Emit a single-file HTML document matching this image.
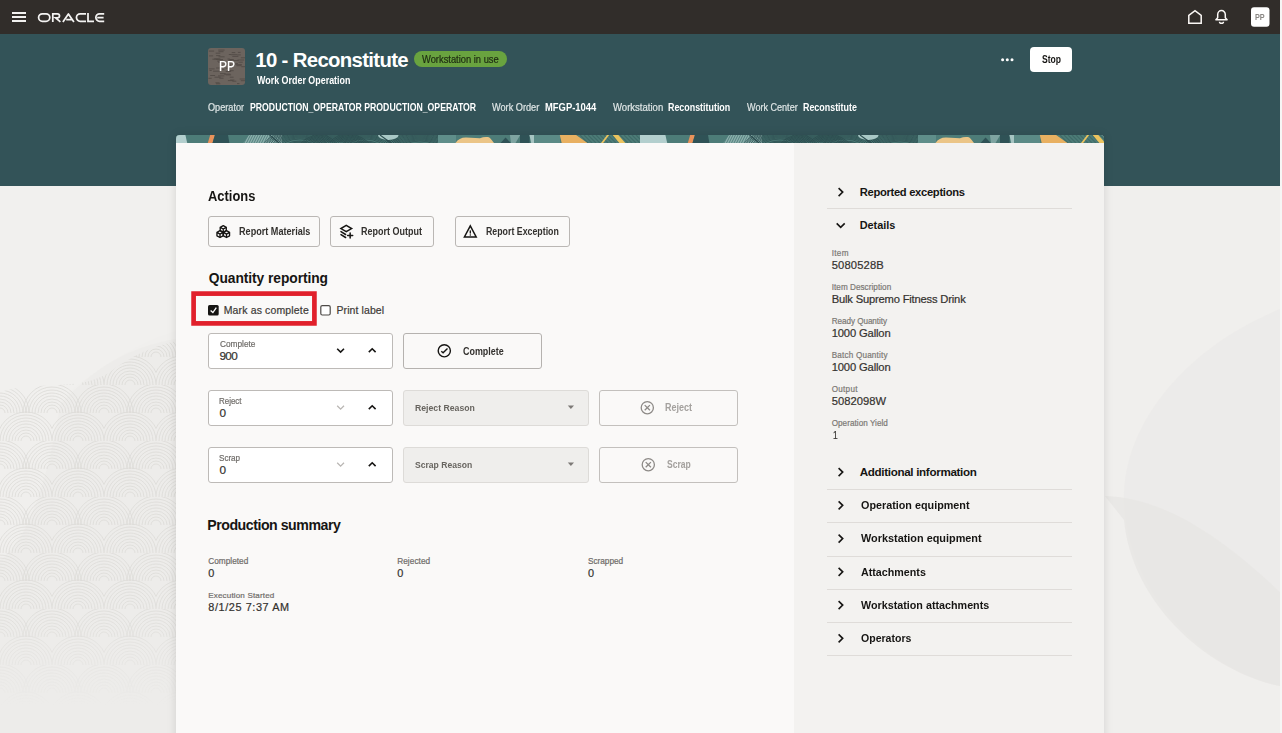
<!DOCTYPE html>
<html><head><meta charset="utf-8"><style>
html,body{margin:0;padding:0;width:1282px;height:733px;overflow:hidden;position:relative;background:#f0efed;font-family:"Liberation Sans",sans-serif;}
.t{position:absolute;white-space:nowrap;}
.t.r{-webkit-text-stroke:0.2px currentColor;}
.a{position:absolute;box-sizing:border-box;}
svg{position:absolute;overflow:visible;}
</style></head><body>
<!-- top bar -->
<div class="a" style="left:0;top:0;width:1282px;height:34px;background:#312d2a"></div>
<div class="a" style="left:0;top:34px;width:1282px;height:152px;background:#335358"></div>
<div class="a" style="left:1280px;top:0;width:2px;height:733px;background:#f6f6f5"></div>
<!-- bg pattern -->
<svg style="left:0;top:186px" width="1280" height="547" viewBox="0 186 1280 547">
  <defs>
    <pattern id="arcs" x="0" y="385" width="52" height="56" patternUnits="userSpaceOnUse">
      <path d="M21,56 A5,5 0 0 1 31,56 M18,56 A8,8 0 0 1 34,56 M15,56 A11,11 0 0 1 37,56 M12,56 A14,14 0 0 1 40,56 M9,56 A17,17 0 0 1 43,56 M6,56 A20,20 0 0 1 46,56 M3,56 A23,23 0 0 1 49,56 M0,56 A26,26 0 0 1 52,56 M-3,56 A29,29 0 0 1 55,56 M-5,28 A5,5 0 0 1 5,28 M-8,28 A8,8 0 0 1 8,28 M-11,28 A11,11 0 0 1 11,28 M-14,28 A14,14 0 0 1 14,28 M-17,28 A17,17 0 0 1 17,28 M-20,28 A20,20 0 0 1 20,28 M-23,28 A23,23 0 0 1 23,28 M-26,28 A26,26 0 0 1 26,28 M-29,28 A29,29 0 0 1 29,28 M47,28 A5,5 0 0 1 57,28 M44,28 A8,8 0 0 1 60,28 M41,28 A11,11 0 0 1 63,28 M38,28 A14,14 0 0 1 66,28 M35,28 A17,17 0 0 1 69,28 M32,28 A20,20 0 0 1 72,28 M29,28 A23,23 0 0 1 75,28 M26,28 A26,26 0 0 1 78,28 M23,28 A29,29 0 0 1 81,28 M21,0 A5,5 0 0 1 31,0 M18,0 A8,8 0 0 1 34,0 M15,0 A11,11 0 0 1 37,0 M12,0 A14,14 0 0 1 40,0 M9,0 A17,17 0 0 1 43,0 M6,0 A20,20 0 0 1 46,0 M3,0 A23,23 0 0 1 49,0 M0,0 A26,26 0 0 1 52,0 M-3,0 A29,29 0 0 1 55,0" fill="none" stroke="#dbd9d6" stroke-width="0.8"/>
    </pattern>
    <linearGradient id="fadeb" x1="0" y1="0" x2="0" y2="1">
      <stop offset="0" stop-color="#fff" stop-opacity="1"/>
      <stop offset="0.7" stop-color="#fff" stop-opacity="0.85"/>
      <stop offset="0.93" stop-color="#fff" stop-opacity="0"/>
    </linearGradient>
    <mask id="m1"><path d="M0,392 C40,380 80,392 110,372 C140,350 160,345 180,340 V733 H0 Z" fill="url(#fadeb)"/></mask>
  </defs>
  <path d="M0,186 H180 V330 C140,340 95,370 60,400 L0,400 Z" fill="#f1f0ee"/>
  <path d="M60,405 C100,360 140,345 180,338 V733 H0 V560 C30,540 50,470 60,405 Z" fill="#ecebe9" opacity="0.8"/>
  <rect x="0" y="330" width="180" height="403" fill="url(#arcs)" mask="url(#m1)"/>
  <path d="M1280,309 C1180,350 1120,430 1124,505 C1130,600 1210,672 1280,686 Z" fill="#ebeae8" opacity="0.75"/>
  <path d="M1105,496 C1170,498 1230,545 1280,592 L1280,686 C1210,672 1132,605 1124,520 Z" fill="#e7e6e4" opacity="0.8"/>
</svg>
<!-- hamburger -->
<div class="a" style="left:12px;top:12px;width:14px;height:2px;background:#f2f1f0"></div>
<div class="a" style="left:12px;top:16px;width:14px;height:2px;background:#f2f1f0"></div>
<div class="a" style="left:12px;top:20px;width:14px;height:2px;background:#f2f1f0"></div>
<!-- ORACLE logo -->
<svg style="left:0;top:0" width="120" height="33" viewBox="0 0 120 33">
  <g fill="none" stroke="#f4f3f2" stroke-width="1.75" stroke-linejoin="miter">
    <rect x="38.6" y="13.75" width="11.2" height="7.5" rx="3.75"/>
    <path d="M52.8,21.9 V13.75 H57.4 A2.1,2.1 0 0 1 57.4,17.95 H55.6 L60.4,21.9"/>
    <path d="M62.9,21.9 L68.4,13.9 L73.9,21.9 M66.2,19.5 H72.2" stroke-linejoin="round"/>
    <path d="M86,13.75 H80.2 A3.75,3.75 0 0 0 80.2,21.25 H86"/>
    <path d="M88,12.9 V21.25 H94"/>
    <path d="M104.2,13.75 H99.6 A3.75,3.75 0 0 0 99.6,21.25 H104.2 M97.2,17.5 H103.6"/>
  </g>
</svg>
<!-- top right icons -->
<svg style="left:1180px;top:0" width="100" height="33" viewBox="1180 0 100 33">
  <path d="M1188.8,23.3 V15.3 L1195,10.6 L1201.2,15.3 V23.3 Z" fill="none" stroke="#fbf8f6" stroke-width="1.5" stroke-linejoin="miter"/>
  <path d="M1215.9,19.7 H1227.1 L1225.3,17.8 V14.6 A3.7,4 0 0 0 1217.7,14.6 V17.8 Z" fill="none" stroke="#fbf8f6" stroke-width="1.5" stroke-linejoin="round"/>
  <path d="M1219.5,21.7 A2,1.6 0 0 0 1223.5,21.7" fill="none" stroke="#fbf8f6" stroke-width="1.4"/>
  <rect x="1251" y="7.2" width="18.5" height="19.6" rx="3" fill="#ffffff"/>
</svg>
<!-- header avatar -->
<svg style="left:208px;top:48px" width="37" height="37" viewBox="0 0 37 37">
  <rect x="0" y="0" width="37" height="37" rx="3" fill="#6c645e"/>
  <g stroke="#4a433e" stroke-width="0.9" opacity="0.75"><path d="M8.1,20.0 H11.9 M20.5,22.9 H22.9 M0.4,30.3 H3.7 M8.0,35.8 H12.3 M28.4,17.7 H33.6 M5.1,23.2 H11.5 M17.8,26.9 H23.1 M2.2,27.5 H7.1 M10.2,2.1 H16.6 M16.1,26.2 H22.5 M24.3,33.2 H28.3 M27.2,16.6 H33.9 M29.9,4.4 H32.6 M7.4,34.8 H11.6 M21.3,11.5 H25.8 M13.1,13.3 H18.0 M19.9,32.6 H25.3 M31.6,31.0 H37.0 M22.8,6.7 H29.1 M32.8,32.7 H37.0 M24.3,8.4 H30.4 M19.5,11.0 H21.8 M29.0,35.6 H31.5 M27.2,15.4 H30.0 M10.0,27.9 H16.4 M1.5,22.5 H3.7 M24.4,12.6 H30.8 M33.3,18.7 H37.0 M10.5,3.7 H15.5 M1.1,7.9 H5.1 M20.8,6.5 H23.0 M29.5,12.0 H36.3 M30.5,14.2 H34.8 M17.7,23.5 H22.7 M19.0,22.7 H25.7 M17.2,16.1 H22.8 M8.1,11.5 H15.0 M17.7,20.2 H19.8 M14.1,21.3 H16.2 M20.9,23.1 H23.2 M21.3,17.3 H26.7 M12.0,25.7 H17.7 M0.8,3.1 H6.1 M32.8,9.8 H37.0 M20.2,12.2 H24.0 M10.6,13.9 H15.6 M10.2,14.2 H16.1 M0.9,20.9 H6.6 M10.5,8.8 H16.6 M8.1,7.6 H12.3 M23.7,4.6 H27.3 M11.3,30.2 H15.5 M29.1,6.9 H32.8 M22.1,32.0 H26.4 M7.7,5.2 H12.3 M6.5,29.2 H12.7 M6.2,10.8 H12.3 M21.8,29.2 H25.6 M4.4,11.2 H10.4 M9.2,13.1 H13.3"/></g>
</svg>
<!-- badge -->
<div class="a" style="left:414px;top:51px;width:93px;height:16px;border-radius:8px;background:#69a33f"></div>
<!-- more dots + stop -->
<svg style="left:995px;top:52px" width="25" height="15" viewBox="995 52 25 15">
  <circle cx="1002.6" cy="59.7" r="1.5" fill="#fff"/><circle cx="1007.3" cy="59.7" r="1.5" fill="#fff"/><circle cx="1012" cy="59.7" r="1.5" fill="#fff"/>
</svg>
<div class="a" style="left:1030px;top:47px;width:42px;height:25px;border-radius:4px;background:#ffffff"></div>

<!-- card -->
<div class="a" style="left:176px;top:135px;width:928px;height:620px;border-radius:4px 4px 0 0;box-shadow:0 0 8px 1px rgba(0,0,0,0.10)"></div>
<div class="a" style="left:176px;top:135px;width:928px;height:600px;border-radius:4px 4px 0 0;background:#faf9f8;overflow:hidden">
  <svg style="left:0;top:0;overflow:hidden" width="928" height="8" viewBox="176 135 928 8" preserveAspectRatio="none">
    
    <rect x="176" y="135" width="928" height="8" fill="#4f7e7a"/>
    <g>
        <rect x="160" y="135" width="480" height="8" fill="#4d7c78"/>
        <polygon points="160,135 185.4,135 187.2,143 160,143" fill="#b3cfce"/>
        <polygon points="210.2,135 214.9,135 212.5,143 207.8,143" fill="#e9925a"/>
        <polygon points="214.9,135 228,135 229.4,143 212.5,143" fill="#2f5256"/>
        <polygon points="249,135 282,135 282,143 243.4,143" fill="#8db0ad"/>
        <path d="M244.0,143 L248.0,135 M246.5,143 L250.5,135 M249.0,143 L253.0,135 M251.5,143 L255.5,135 M254.0,143 L258.0,135 M256.5,143 L260.5,135 M259.0,143 L263.0,135 M261.5,143 L265.5,135 M264.0,143 L268.0,135 M266.5,143 L270.5,135 M269.0,143 L273.0,135 M271.5,143 L275.5,135 M274.0,143 L278.0,135 M276.5,143 L280.5,135 M279.0,143 L283.0,135" stroke="#4d7c78" stroke-width="0.9"/>
        <rect x="282" y="135" width="156" height="8" fill="#4a7874"/>
        <path d="M292.0,150.0 A8,4 0 0 1 308.0,150.0 M290.0,150.0 A10,5 0 0 1 310.0,150.0 M288.0,150.0 A12,6 0 0 1 312.0,150.0 M286.0,150.0 A14,7 0 0 1 314.0,150.0 M284.0,150.0 A16,8 0 0 1 316.0,150.0 M282.0,150.0 A18,9 0 0 1 318.0,150.0 M280.0,150.0 A20,11 0 0 1 320.0,150.0 M278.0,150.0 A22,12 0 0 1 322.0,150.0 M276.0,150.0 A24,13 0 0 1 324.0,150.0 M274.0,150.0 A26,14 0 0 1 326.0,150.0 M272.0,150.0 A28,15 0 0 1 328.0,150.0 M270.0,150.0 A30,16 0 0 1 330.0,150.0 M268.0,150.0 A32,17 0 0 1 332.0,150.0 M266.0,150.0 A34,18 0 0 1 334.0,150.0 M264.0,150.0 A36,19 0 0 1 336.0,150.0 M262.0,150.0 A38,20 0 0 1 338.0,150.0 M327.0,152.0 A8,4 0 0 1 343.0,152.0 M325.0,152.0 A10,5 0 0 1 345.0,152.0 M323.0,152.0 A12,6 0 0 1 347.0,152.0 M321.0,152.0 A14,7 0 0 1 349.0,152.0 M319.0,152.0 A16,8 0 0 1 351.0,152.0 M317.0,152.0 A18,9 0 0 1 353.0,152.0 M315.0,152.0 A20,11 0 0 1 355.0,152.0 M313.0,152.0 A22,12 0 0 1 357.0,152.0 M311.0,152.0 A24,13 0 0 1 359.0,152.0 M309.0,152.0 A26,14 0 0 1 361.0,152.0 M307.0,152.0 A28,15 0 0 1 363.0,152.0 M305.0,152.0 A30,16 0 0 1 365.0,152.0 M303.0,152.0 A32,17 0 0 1 367.0,152.0 M301.0,152.0 A34,18 0 0 1 369.0,152.0 M299.0,152.0 A36,19 0 0 1 371.0,152.0 M297.0,152.0 A38,20 0 0 1 373.0,152.0 M357.0,150.0 A8,4 0 0 1 373.0,150.0 M355.0,150.0 A10,5 0 0 1 375.0,150.0 M353.0,150.0 A12,6 0 0 1 377.0,150.0 M351.0,150.0 A14,7 0 0 1 379.0,150.0 M349.0,150.0 A16,8 0 0 1 381.0,150.0 M347.0,150.0 A18,9 0 0 1 383.0,150.0 M345.0,150.0 A20,11 0 0 1 385.0,150.0 M343.0,150.0 A22,12 0 0 1 387.0,150.0 M341.0,150.0 A24,13 0 0 1 389.0,150.0 M339.0,150.0 A26,14 0 0 1 391.0,150.0 M337.0,150.0 A28,15 0 0 1 393.0,150.0 M335.0,150.0 A30,16 0 0 1 395.0,150.0 M333.0,150.0 A32,17 0 0 1 397.0,150.0 M331.0,150.0 A34,18 0 0 1 399.0,150.0 M329.0,150.0 A36,19 0 0 1 401.0,150.0 M327.0,150.0 A38,20 0 0 1 403.0,150.0 M412.0,152.0 A8,4 0 0 1 428.0,152.0 M410.0,152.0 A10,5 0 0 1 430.0,152.0 M408.0,152.0 A12,6 0 0 1 432.0,152.0 M406.0,152.0 A14,7 0 0 1 434.0,152.0 M404.0,152.0 A16,8 0 0 1 436.0,152.0 M402.0,152.0 A18,9 0 0 1 438.0,152.0 M400.0,152.0 A20,11 0 0 1 440.0,152.0 M398.0,152.0 A22,12 0 0 1 442.0,152.0 M396.0,152.0 A24,13 0 0 1 444.0,152.0 M394.0,152.0 A26,14 0 0 1 446.0,152.0 M392.0,152.0 A28,15 0 0 1 448.0,152.0 M390.0,152.0 A30,16 0 0 1 450.0,152.0 M388.0,152.0 A32,17 0 0 1 452.0,152.0 M386.0,152.0 A34,18 0 0 1 454.0,152.0 M384.0,152.0 A36,19 0 0 1 456.0,152.0 M382.0,152.0 A38,20 0 0 1 458.0,152.0" stroke="#2b4b4e" stroke-width="0.7" fill="none"/>
        <path d="M269.6,135 L279,143" stroke="#2b4b4e" stroke-width="1.2"/>
        <path d="M378,135 H398.6 A10.3,5 0 0 1 378,135 Z" fill="#a9c8c6"/>
        <path d="M380,135 L391,143" stroke="#2b4b4e" stroke-width="1.1"/>
        <rect x="438" y="135" width="18" height="8" fill="#5f8e8a"/>
        <path d="M455.5,143 C458,139.5 461,137.6 466,137.6 L480,138.3 C483,136.8 486,136.6 489,137.2 C491,138.5 492.5,141 494,143 Z" fill="#ebc587"/>
        <polygon points="500.5,143 505.6,137.5 510.8,143" fill="#2f5256"/>
        <polygon points="509.9,135 520.2,135 515.5,143 511,143" fill="#7ea4a1"/>
        <rect x="520" y="135" width="9.6" height="8" fill="#2f5256"/>
        <polygon points="529.4,135 534,135 537.8,143 531.2,143" fill="#a6c4c2"/>
        <rect x="534" y="135" width="26" height="8" fill="#5b8a86"/>
        <path d="M572.0,135 L580.0,143 M576.0,135 L584.0,143 M580.0,135 L588.0,143 M584.0,135 L592.0,143 M588.0,135 L596.0,143 M592.0,135 L600.0,143 M596.0,135 L604.0,143 M600.0,135 L608.0,143 M604.0,135 L612.0,143 M608.0,135 L616.0,143 M612.0,135 L620.0,143 M616.0,135 L624.0,143 M620.0,135 L628.0,143 M624.0,135 L632.0,143 M628.0,135 L636.0,143 M632.0,135 L640.0,143 M636.0,135 L644.0,143" stroke="#3f6b68" stroke-width="1.2"/>
        <polygon points="559.8,135 576.2,135 587.4,143 561.7,143" fill="#e8b061"/>
        <polygon points="607,135 609.2,135 603.2,143 601,143" fill="#ebc35e"/>
        <polygon points="612.7,135 618.3,135 625.3,143 619.3,143" fill="#ebc35e"/>
      </g>
    <g transform="translate(480,0)">
        <rect x="160" y="135" width="480" height="8" fill="#4d7c78"/>
        <polygon points="160,135 185.4,135 187.2,143 160,143" fill="#b3cfce"/>
        <polygon points="210.2,135 214.9,135 212.5,143 207.8,143" fill="#e9925a"/>
        <polygon points="214.9,135 228,135 229.4,143 212.5,143" fill="#2f5256"/>
        <polygon points="249,135 282,135 282,143 243.4,143" fill="#8db0ad"/>
        <path d="M244.0,143 L248.0,135 M246.5,143 L250.5,135 M249.0,143 L253.0,135 M251.5,143 L255.5,135 M254.0,143 L258.0,135 M256.5,143 L260.5,135 M259.0,143 L263.0,135 M261.5,143 L265.5,135 M264.0,143 L268.0,135 M266.5,143 L270.5,135 M269.0,143 L273.0,135 M271.5,143 L275.5,135 M274.0,143 L278.0,135 M276.5,143 L280.5,135 M279.0,143 L283.0,135" stroke="#4d7c78" stroke-width="0.9"/>
        <rect x="282" y="135" width="156" height="8" fill="#4a7874"/>
        <path d="M292.0,150.0 A8,4 0 0 1 308.0,150.0 M290.0,150.0 A10,5 0 0 1 310.0,150.0 M288.0,150.0 A12,6 0 0 1 312.0,150.0 M286.0,150.0 A14,7 0 0 1 314.0,150.0 M284.0,150.0 A16,8 0 0 1 316.0,150.0 M282.0,150.0 A18,9 0 0 1 318.0,150.0 M280.0,150.0 A20,11 0 0 1 320.0,150.0 M278.0,150.0 A22,12 0 0 1 322.0,150.0 M276.0,150.0 A24,13 0 0 1 324.0,150.0 M274.0,150.0 A26,14 0 0 1 326.0,150.0 M272.0,150.0 A28,15 0 0 1 328.0,150.0 M270.0,150.0 A30,16 0 0 1 330.0,150.0 M268.0,150.0 A32,17 0 0 1 332.0,150.0 M266.0,150.0 A34,18 0 0 1 334.0,150.0 M264.0,150.0 A36,19 0 0 1 336.0,150.0 M262.0,150.0 A38,20 0 0 1 338.0,150.0 M327.0,152.0 A8,4 0 0 1 343.0,152.0 M325.0,152.0 A10,5 0 0 1 345.0,152.0 M323.0,152.0 A12,6 0 0 1 347.0,152.0 M321.0,152.0 A14,7 0 0 1 349.0,152.0 M319.0,152.0 A16,8 0 0 1 351.0,152.0 M317.0,152.0 A18,9 0 0 1 353.0,152.0 M315.0,152.0 A20,11 0 0 1 355.0,152.0 M313.0,152.0 A22,12 0 0 1 357.0,152.0 M311.0,152.0 A24,13 0 0 1 359.0,152.0 M309.0,152.0 A26,14 0 0 1 361.0,152.0 M307.0,152.0 A28,15 0 0 1 363.0,152.0 M305.0,152.0 A30,16 0 0 1 365.0,152.0 M303.0,152.0 A32,17 0 0 1 367.0,152.0 M301.0,152.0 A34,18 0 0 1 369.0,152.0 M299.0,152.0 A36,19 0 0 1 371.0,152.0 M297.0,152.0 A38,20 0 0 1 373.0,152.0 M357.0,150.0 A8,4 0 0 1 373.0,150.0 M355.0,150.0 A10,5 0 0 1 375.0,150.0 M353.0,150.0 A12,6 0 0 1 377.0,150.0 M351.0,150.0 A14,7 0 0 1 379.0,150.0 M349.0,150.0 A16,8 0 0 1 381.0,150.0 M347.0,150.0 A18,9 0 0 1 383.0,150.0 M345.0,150.0 A20,11 0 0 1 385.0,150.0 M343.0,150.0 A22,12 0 0 1 387.0,150.0 M341.0,150.0 A24,13 0 0 1 389.0,150.0 M339.0,150.0 A26,14 0 0 1 391.0,150.0 M337.0,150.0 A28,15 0 0 1 393.0,150.0 M335.0,150.0 A30,16 0 0 1 395.0,150.0 M333.0,150.0 A32,17 0 0 1 397.0,150.0 M331.0,150.0 A34,18 0 0 1 399.0,150.0 M329.0,150.0 A36,19 0 0 1 401.0,150.0 M327.0,150.0 A38,20 0 0 1 403.0,150.0 M412.0,152.0 A8,4 0 0 1 428.0,152.0 M410.0,152.0 A10,5 0 0 1 430.0,152.0 M408.0,152.0 A12,6 0 0 1 432.0,152.0 M406.0,152.0 A14,7 0 0 1 434.0,152.0 M404.0,152.0 A16,8 0 0 1 436.0,152.0 M402.0,152.0 A18,9 0 0 1 438.0,152.0 M400.0,152.0 A20,11 0 0 1 440.0,152.0 M398.0,152.0 A22,12 0 0 1 442.0,152.0 M396.0,152.0 A24,13 0 0 1 444.0,152.0 M394.0,152.0 A26,14 0 0 1 446.0,152.0 M392.0,152.0 A28,15 0 0 1 448.0,152.0 M390.0,152.0 A30,16 0 0 1 450.0,152.0 M388.0,152.0 A32,17 0 0 1 452.0,152.0 M386.0,152.0 A34,18 0 0 1 454.0,152.0 M384.0,152.0 A36,19 0 0 1 456.0,152.0 M382.0,152.0 A38,20 0 0 1 458.0,152.0" stroke="#2b4b4e" stroke-width="0.7" fill="none"/>
        <path d="M269.6,135 L279,143" stroke="#2b4b4e" stroke-width="1.2"/>
        <path d="M378,135 H398.6 A10.3,5 0 0 1 378,135 Z" fill="#a9c8c6"/>
        <path d="M380,135 L391,143" stroke="#2b4b4e" stroke-width="1.1"/>
        <rect x="438" y="135" width="18" height="8" fill="#5f8e8a"/>
        <path d="M455.5,143 C458,139.5 461,137.6 466,137.6 L480,138.3 C483,136.8 486,136.6 489,137.2 C491,138.5 492.5,141 494,143 Z" fill="#ebc587"/>
        <polygon points="500.5,143 505.6,137.5 510.8,143" fill="#2f5256"/>
        <polygon points="509.9,135 520.2,135 515.5,143 511,143" fill="#7ea4a1"/>
        <rect x="520" y="135" width="9.6" height="8" fill="#2f5256"/>
        <polygon points="529.4,135 534,135 537.8,143 531.2,143" fill="#a6c4c2"/>
        <rect x="534" y="135" width="26" height="8" fill="#5b8a86"/>
        <path d="M572.0,135 L580.0,143 M576.0,135 L584.0,143 M580.0,135 L588.0,143 M584.0,135 L592.0,143 M588.0,135 L596.0,143 M592.0,135 L600.0,143 M596.0,135 L604.0,143 M600.0,135 L608.0,143 M604.0,135 L612.0,143 M608.0,135 L616.0,143 M612.0,135 L620.0,143 M616.0,135 L624.0,143 M620.0,135 L628.0,143 M624.0,135 L632.0,143 M628.0,135 L636.0,143 M632.0,135 L640.0,143 M636.0,135 L644.0,143" stroke="#3f6b68" stroke-width="1.2"/>
        <polygon points="559.8,135 576.2,135 587.4,143 561.7,143" fill="#e8b061"/>
        <polygon points="607,135 609.2,135 603.2,143 601,143" fill="#ebc35e"/>
        <polygon points="612.7,135 618.3,135 625.3,143 619.3,143" fill="#ebc35e"/>
      </g>
    <g transform="translate(960,0)">
        <rect x="160" y="135" width="480" height="8" fill="#4d7c78"/>
        <polygon points="160,135 185.4,135 187.2,143 160,143" fill="#b3cfce"/>
        <polygon points="210.2,135 214.9,135 212.5,143 207.8,143" fill="#e9925a"/>
        <polygon points="214.9,135 228,135 229.4,143 212.5,143" fill="#2f5256"/>
        <polygon points="249,135 282,135 282,143 243.4,143" fill="#8db0ad"/>
        <path d="M244.0,143 L248.0,135 M246.5,143 L250.5,135 M249.0,143 L253.0,135 M251.5,143 L255.5,135 M254.0,143 L258.0,135 M256.5,143 L260.5,135 M259.0,143 L263.0,135 M261.5,143 L265.5,135 M264.0,143 L268.0,135 M266.5,143 L270.5,135 M269.0,143 L273.0,135 M271.5,143 L275.5,135 M274.0,143 L278.0,135 M276.5,143 L280.5,135 M279.0,143 L283.0,135" stroke="#4d7c78" stroke-width="0.9"/>
        <rect x="282" y="135" width="156" height="8" fill="#4a7874"/>
        <path d="M292.0,150.0 A8,4 0 0 1 308.0,150.0 M290.0,150.0 A10,5 0 0 1 310.0,150.0 M288.0,150.0 A12,6 0 0 1 312.0,150.0 M286.0,150.0 A14,7 0 0 1 314.0,150.0 M284.0,150.0 A16,8 0 0 1 316.0,150.0 M282.0,150.0 A18,9 0 0 1 318.0,150.0 M280.0,150.0 A20,11 0 0 1 320.0,150.0 M278.0,150.0 A22,12 0 0 1 322.0,150.0 M276.0,150.0 A24,13 0 0 1 324.0,150.0 M274.0,150.0 A26,14 0 0 1 326.0,150.0 M272.0,150.0 A28,15 0 0 1 328.0,150.0 M270.0,150.0 A30,16 0 0 1 330.0,150.0 M268.0,150.0 A32,17 0 0 1 332.0,150.0 M266.0,150.0 A34,18 0 0 1 334.0,150.0 M264.0,150.0 A36,19 0 0 1 336.0,150.0 M262.0,150.0 A38,20 0 0 1 338.0,150.0 M327.0,152.0 A8,4 0 0 1 343.0,152.0 M325.0,152.0 A10,5 0 0 1 345.0,152.0 M323.0,152.0 A12,6 0 0 1 347.0,152.0 M321.0,152.0 A14,7 0 0 1 349.0,152.0 M319.0,152.0 A16,8 0 0 1 351.0,152.0 M317.0,152.0 A18,9 0 0 1 353.0,152.0 M315.0,152.0 A20,11 0 0 1 355.0,152.0 M313.0,152.0 A22,12 0 0 1 357.0,152.0 M311.0,152.0 A24,13 0 0 1 359.0,152.0 M309.0,152.0 A26,14 0 0 1 361.0,152.0 M307.0,152.0 A28,15 0 0 1 363.0,152.0 M305.0,152.0 A30,16 0 0 1 365.0,152.0 M303.0,152.0 A32,17 0 0 1 367.0,152.0 M301.0,152.0 A34,18 0 0 1 369.0,152.0 M299.0,152.0 A36,19 0 0 1 371.0,152.0 M297.0,152.0 A38,20 0 0 1 373.0,152.0 M357.0,150.0 A8,4 0 0 1 373.0,150.0 M355.0,150.0 A10,5 0 0 1 375.0,150.0 M353.0,150.0 A12,6 0 0 1 377.0,150.0 M351.0,150.0 A14,7 0 0 1 379.0,150.0 M349.0,150.0 A16,8 0 0 1 381.0,150.0 M347.0,150.0 A18,9 0 0 1 383.0,150.0 M345.0,150.0 A20,11 0 0 1 385.0,150.0 M343.0,150.0 A22,12 0 0 1 387.0,150.0 M341.0,150.0 A24,13 0 0 1 389.0,150.0 M339.0,150.0 A26,14 0 0 1 391.0,150.0 M337.0,150.0 A28,15 0 0 1 393.0,150.0 M335.0,150.0 A30,16 0 0 1 395.0,150.0 M333.0,150.0 A32,17 0 0 1 397.0,150.0 M331.0,150.0 A34,18 0 0 1 399.0,150.0 M329.0,150.0 A36,19 0 0 1 401.0,150.0 M327.0,150.0 A38,20 0 0 1 403.0,150.0 M412.0,152.0 A8,4 0 0 1 428.0,152.0 M410.0,152.0 A10,5 0 0 1 430.0,152.0 M408.0,152.0 A12,6 0 0 1 432.0,152.0 M406.0,152.0 A14,7 0 0 1 434.0,152.0 M404.0,152.0 A16,8 0 0 1 436.0,152.0 M402.0,152.0 A18,9 0 0 1 438.0,152.0 M400.0,152.0 A20,11 0 0 1 440.0,152.0 M398.0,152.0 A22,12 0 0 1 442.0,152.0 M396.0,152.0 A24,13 0 0 1 444.0,152.0 M394.0,152.0 A26,14 0 0 1 446.0,152.0 M392.0,152.0 A28,15 0 0 1 448.0,152.0 M390.0,152.0 A30,16 0 0 1 450.0,152.0 M388.0,152.0 A32,17 0 0 1 452.0,152.0 M386.0,152.0 A34,18 0 0 1 454.0,152.0 M384.0,152.0 A36,19 0 0 1 456.0,152.0 M382.0,152.0 A38,20 0 0 1 458.0,152.0" stroke="#2b4b4e" stroke-width="0.7" fill="none"/>
        <path d="M269.6,135 L279,143" stroke="#2b4b4e" stroke-width="1.2"/>
        <path d="M378,135 H398.6 A10.3,5 0 0 1 378,135 Z" fill="#a9c8c6"/>
        <path d="M380,135 L391,143" stroke="#2b4b4e" stroke-width="1.1"/>
        <rect x="438" y="135" width="18" height="8" fill="#5f8e8a"/>
        <path d="M455.5,143 C458,139.5 461,137.6 466,137.6 L480,138.3 C483,136.8 486,136.6 489,137.2 C491,138.5 492.5,141 494,143 Z" fill="#ebc587"/>
        <polygon points="500.5,143 505.6,137.5 510.8,143" fill="#2f5256"/>
        <polygon points="509.9,135 520.2,135 515.5,143 511,143" fill="#7ea4a1"/>
        <rect x="520" y="135" width="9.6" height="8" fill="#2f5256"/>
        <polygon points="529.4,135 534,135 537.8,143 531.2,143" fill="#a6c4c2"/>
        <rect x="534" y="135" width="26" height="8" fill="#5b8a86"/>
        <path d="M572.0,135 L580.0,143 M576.0,135 L584.0,143 M580.0,135 L588.0,143 M584.0,135 L592.0,143 M588.0,135 L596.0,143 M592.0,135 L600.0,143 M596.0,135 L604.0,143 M600.0,135 L608.0,143 M604.0,135 L612.0,143 M608.0,135 L616.0,143 M612.0,135 L620.0,143 M616.0,135 L624.0,143 M620.0,135 L628.0,143 M624.0,135 L632.0,143 M628.0,135 L636.0,143 M632.0,135 L640.0,143 M636.0,135 L644.0,143" stroke="#3f6b68" stroke-width="1.2"/>
        <polygon points="559.8,135 576.2,135 587.4,143 561.7,143" fill="#e8b061"/>
        <polygon points="607,135 609.2,135 603.2,143 601,143" fill="#ebc35e"/>
        <polygon points="612.7,135 618.3,135 625.3,143 619.3,143" fill="#ebc35e"/>
      </g>
  </svg>
</div>
<div class="a" style="left:794px;top:143px;width:310px;height:592px;background:#f3f2f0"></div>

<!-- Action buttons -->
<div class="a" style="left:208px;top:216px;width:112px;height:31px;border:1px solid #bab7b4;border-radius:3px;background:#faf9f8"></div>
<div class="a" style="left:330px;top:216px;width:104px;height:31px;border:1px solid #bab7b4;border-radius:3px;background:#faf9f8"></div>
<div class="a" style="left:455px;top:216px;width:115px;height:31px;border:1px solid #bab7b4;border-radius:3px;background:#faf9f8"></div>
<svg style="left:200px;top:210px" width="300" height="40" viewBox="200 210 300 40">
  <g fill="none" stroke="#161513" stroke-width="1.35" stroke-linejoin="round">
    <path d="M223.25,225.6 L226.3,227.3 V230.7 L223.25,232.4 L220.2,230.7 V227.3 Z M220.2,227.3 L223.25,229 L226.3,227.3 M223.25,229 V232.4"/>
    <path d="M220,230.7 L223.05,232.4 V235.8 L220,237.5 L216.95,235.8 V232.4 Z M216.95,232.4 L220,234.1 L223.05,232.4 M220,234.1 V237.5"/>
    <path d="M226.5,230.7 L229.55,232.4 V235.8 L226.5,237.5 L223.45,235.8 V232.4 Z M223.45,232.4 L226.5,234.1 L229.55,232.4 M226.5,234.1 V237.5"/>
  </g>
  <g fill="none" stroke="#161513" stroke-width="1.5" stroke-linecap="round" stroke-linejoin="miter">
    <path d="M346.25,225.4 L351.6,228.55 L346.25,231.7 L340.9,228.55 Z"/>
    <path d="M341,231.6 L345.6,234.5 M341,234.6 L345.6,237.5 M347.6,235.5 H352.7 M350.15,233 V238"/>
  </g>
  <g fill="none" stroke="#161513" stroke-width="1.5" stroke-linejoin="miter">
    <path d="M470.3,225.8 L476.2,237 H464.4 Z"/>
  </g>
  <path d="M470.3,230.8 V233" stroke="#161513" stroke-width="1.3" stroke-linecap="round"/>
  <circle cx="470.3" cy="235" r="0.75" fill="#161513"/>
</svg>

<!-- red box + checkboxes -->
<svg style="left:185px;top:285px" width="160" height="50" viewBox="185 285 160 50">
  <rect x="193.6" y="293.6" width="120.8" height="29.8" fill="none" stroke="#e1202b" stroke-width="4.7"/>
  <rect x="208" y="305" width="10.7" height="10.6" rx="1.6" fill="#161513"/>
  <path d="M210.6,310.4 L212.9,312.5 L216.3,307.6" fill="none" stroke="#fff" stroke-width="1.3"/>
  <rect x="320.8" y="305.6" width="9.4" height="9.4" rx="1.5" fill="#fff" stroke="#4d4a47" stroke-width="1.2"/>
</svg>

<!-- inputs rows -->
<div class="a" style="left:208px;top:333px;width:185px;height:36px;border:1px solid #bdbab7;border-radius:3px;background:#ffffff"></div>
<div class="a" style="left:403px;top:333px;width:139px;height:36px;border:1px solid #b5b2af;border-radius:3px;background:#faf9f8"></div>
<div class="a" style="left:208px;top:390px;width:185px;height:36px;border:1px solid #bdbab7;border-radius:3px;background:#ffffff"></div>
<div class="a" style="left:403px;top:390px;width:186px;height:36px;border:1px solid #dddbd8;border-radius:3px;background:#efeeec"></div>
<div class="a" style="left:599px;top:390px;width:139px;height:36px;border:1px solid #c3c0bd;border-radius:3px;background:#faf9f8"></div>
<div class="a" style="left:208px;top:447px;width:185px;height:36px;border:1px solid #bdbab7;border-radius:3px;background:#ffffff"></div>
<div class="a" style="left:403px;top:447px;width:186px;height:36px;border:1px solid #dddbd8;border-radius:3px;background:#efeeec"></div>
<div class="a" style="left:599px;top:447px;width:139px;height:36px;border:1px solid #c3c0bd;border-radius:3px;background:#faf9f8"></div>
<svg style="left:320px;top:330px" width="350" height="160" viewBox="320 330 350 160">
  <g fill="none" stroke-width="1.6" stroke-linecap="butt" stroke-linejoin="miter">
    <path d="M337.2,348.8 L340.6,352.1 L344,348.8" stroke="#161513"/>
    <path d="M368.8,352.1 L372.2,348.8 L375.6,352.1" stroke="#161513"/>
    <path d="M337.2,405.8 L340.6,409.1 L344,405.8" stroke="#b9b6b3" stroke-width="1.3"/>
    <path d="M368.8,409.1 L372.2,405.8 L375.6,409.1" stroke="#161513"/>
    <path d="M337.2,462.8 L340.6,466.1 L344,462.8" stroke="#b9b6b3" stroke-width="1.3"/>
    <path d="M368.8,466.1 L372.2,462.8 L375.6,466.1" stroke="#161513"/>
  </g>
  <circle cx="444.3" cy="350.8" r="6.1" fill="none" stroke="#161513" stroke-width="1.4"/>
  <path d="M441.3,351.2 L443.1,352.8 L447.5,348.4" fill="none" stroke="#161513" stroke-width="1.4"/>
  <path d="M567.8,405.6 H574 L570.9,409 Z" fill="#7c7976"/>
  <path d="M567.8,462.6 H574 L570.9,466 Z" fill="#7c7976"/>
  <g fill="none" stroke="#8d8a87" stroke-width="1.3">
    <circle cx="647.3" cy="407.7" r="6.1"/>
    <path d="M644.7,405.1 L649.9,410.3 M649.9,405.1 L644.7,410.3"/>
    <circle cx="648.3" cy="464.7" r="6.1"/>
    <path d="M645.7,462.1 L650.9,467.3 M650.9,462.1 L645.7,467.3"/>
  </g>
</svg>

<!-- right panel accordion -->
<svg style="left:820px;top:180px" width="260" height="480" viewBox="820 180 260 480">
  <g fill="none" stroke="#161513" stroke-width="1.6">
    <path d="M838.6,188.1 L842.7,192.1 L838.6,196.1"/>
    <path d="M836.7,223.4 L840.7,227.4 L844.7,223.4"/>
    <path d="M838.6,468.1 L842.7,472.1 L838.6,476.1"/>
    <path d="M838.6,501.35 L842.7,505.35 L838.6,509.35"/>
    <path d="M838.6,534.6 L842.7,538.6 L838.6,542.6"/>
    <path d="M838.6,567.85 L842.7,571.85 L838.6,575.85"/>
    <path d="M838.6,601.1 L842.7,605.1 L838.6,609.1"/>
    <path d="M838.6,634.35 L842.7,638.35 L838.6,642.35"/>
  </g>
  <g fill="#dfdcd9">
    <rect x="827" y="208" width="245" height="1"/>
    <rect x="827" y="489" width="245" height="1"/>
    <rect x="827" y="522" width="245" height="1"/>
    <rect x="827" y="556" width="245" height="1"/>
    <rect x="827" y="589" width="245" height="1"/>
    <rect x="827" y="622" width="245" height="1"/>
    <rect x="827" y="655" width="245" height="1"/>
  </g>
</svg>

<div class="t" id="title" style="left:255.30px;top:50.01px;font-size:20.35px;line-height:20.35px;font-weight:700;color:#ffffff;letter-spacing:-0.662px;">10 - Reconstitute</div>
<div class="t" id="sub" style="left:256.70px;top:76.01px;font-size:10.03px;line-height:10.03px;font-weight:700;color:#ffffff;letter-spacing:0.000px;transform:scaleX(0.8898);transform-origin:0 0;">Work Order Operation</div>
<div class="t r" id="badge" style="left:422.30px;top:55.01px;font-size:10.17px;line-height:10.17px;font-weight:400;color:#1d2a12;letter-spacing:0.000px;transform:scaleX(0.9205);transform-origin:0 0;">Workstation in use</div>
<div class="t r" id="op_l" style="left:207.90px;top:102.00px;font-size:10.76px;line-height:10.76px;font-weight:400;color:#dfe6e6;letter-spacing:0.000px;transform:scaleX(0.8516);transform-origin:0 0;">Operator</div>
<div class="t" id="op_v" style="left:250.30px;top:102.00px;font-size:10.76px;line-height:10.76px;font-weight:700;color:#ffffff;letter-spacing:0.000px;transform:scaleX(0.8095);transform-origin:0 0;">PRODUCTION_OPERATOR PRODUCTION_OPERATOR</div>
<div class="t r" id="wo_l" style="left:491.80px;top:102.00px;font-size:10.76px;line-height:10.76px;font-weight:400;color:#dfe6e6;letter-spacing:0.000px;transform:scaleX(0.8537);transform-origin:0 0;">Work Order</div>
<div class="t" id="wo_v" style="left:545.20px;top:102.00px;font-size:10.76px;line-height:10.76px;font-weight:700;color:#ffffff;letter-spacing:0.000px;transform:scaleX(0.8748);transform-origin:0 0;">MFGP-1044</div>
<div class="t r" id="ws_l" style="left:612.70px;top:102.00px;font-size:10.76px;line-height:10.76px;font-weight:400;color:#dfe6e6;letter-spacing:0.000px;transform:scaleX(0.8879);transform-origin:0 0;">Workstation</div>
<div class="t" id="ws_v" style="left:668.00px;top:102.00px;font-size:10.76px;line-height:10.76px;font-weight:700;color:#ffffff;letter-spacing:0.000px;transform:scaleX(0.8267);transform-origin:0 0;">Reconstitution</div>
<div class="t r" id="wc_l" style="left:746.50px;top:102.00px;font-size:10.76px;line-height:10.76px;font-weight:400;color:#dfe6e6;letter-spacing:0.000px;transform:scaleX(0.8430);transform-origin:0 0;">Work Center</div>
<div class="t" id="wc_v" style="left:802.50px;top:102.00px;font-size:10.76px;line-height:10.76px;font-weight:700;color:#ffffff;letter-spacing:0.000px;transform:scaleX(0.8277);transform-origin:0 0;">Reconstitute</div>
<div class="t" id="stop" style="left:1041.50px;top:55.01px;font-size:10.47px;line-height:10.47px;font-weight:700;color:#161513;letter-spacing:0.000px;transform:scaleX(0.8184);transform-origin:0 0;">Stop</div>
<div class="t r" id="pp" style="left:218.60px;top:59.01px;font-size:14.39px;line-height:14.39px;font-weight:400;color:#ffffff;letter-spacing:0.000px;transform:scaleX(0.8333);transform-origin:0 0;">PP</div>
<div class="t" id="pp2" style="left:1255.20px;top:13.01px;font-size:8.87px;line-height:8.87px;font-weight:700;color:#8a8784;letter-spacing:0.000px;transform:scaleX(0.8217);transform-origin:0 0;">PP</div>
<div class="t" id="actions" style="left:208.40px;top:190.00px;font-size:13.95px;line-height:13.95px;font-weight:700;color:#161513;letter-spacing:0.000px;transform:scaleX(0.9258);transform-origin:0 0;">Actions</div>
<div class="t" id="b1" style="left:238.70px;top:227.00px;font-size:10.32px;line-height:10.32px;font-weight:700;color:#33312e;letter-spacing:0.000px;transform:scaleX(0.8826);transform-origin:0 0;">Report Materials</div>
<div class="t" id="b2" style="left:361.00px;top:227.00px;font-size:10.32px;line-height:10.32px;font-weight:700;color:#33312e;letter-spacing:0.000px;transform:scaleX(0.8714);transform-origin:0 0;">Report Output</div>
<div class="t" id="b3" style="left:485.70px;top:227.00px;font-size:10.32px;line-height:10.32px;font-weight:700;color:#33312e;letter-spacing:0.000px;transform:scaleX(0.8529);transform-origin:0 0;">Report Exception</div>
<div class="t" id="qr" style="left:208.75px;top:272.01px;font-size:13.81px;line-height:13.81px;font-weight:700;color:#161513;letter-spacing:-0.061px;">Quantity reporting</div>
<div class="t r" id="mac" style="left:223.70px;top:306.01px;font-size:10.47px;line-height:10.47px;font-weight:400;color:#3d3a37;letter-spacing:0.161px;">Mark as complete</div>
<div class="t r" id="pl" style="left:336.50px;top:306.01px;font-size:10.47px;line-height:10.47px;font-weight:400;color:#3d3a37;letter-spacing:0.100px;">Print label</div>
<div class="t r" id="c_l" style="left:219.50px;top:340.01px;font-size:8.58px;line-height:8.58px;font-weight:400;color:#6f6c69;letter-spacing:0.000px;transform:scaleX(0.9665);transform-origin:0 0;">Complete</div>
<div class="t r" id="c_v" style="left:219.50px;top:350.01px;font-size:11.77px;line-height:11.77px;font-weight:400;color:#33312e;letter-spacing:-0.700px;">900</div>
<div class="t" id="c_b" style="left:463.00px;top:346.01px;font-size:10.90px;line-height:10.90px;font-weight:700;color:#33312e;letter-spacing:0.000px;transform:scaleX(0.8200);transform-origin:0 0;">Complete</div>
<div class="t r" id="r_l" style="left:219.00px;top:397.01px;font-size:8.58px;line-height:8.58px;font-weight:400;color:#6f6c69;letter-spacing:0.000px;transform:scaleX(0.9259);transform-origin:0 0;">Reject</div>
<div class="t r" id="r_v" style="left:219.50px;top:407.01px;font-size:11.77px;line-height:11.77px;font-weight:400;color:#33312e;letter-spacing:3.000px;">0</div>
<div class="t" id="rr" style="left:415.20px;top:403.00px;font-size:9.74px;line-height:9.74px;font-weight:700;color:#67645f;letter-spacing:0.000px;transform:scaleX(0.8928);transform-origin:0 0;">Reject Reason</div>
<div class="t" id="r_b" style="left:665.00px;top:402.00px;font-size:10.90px;line-height:10.90px;font-weight:700;color:#a4a19e;letter-spacing:0.000px;transform:scaleX(0.8270);transform-origin:0 0;">Reject</div>
<div class="t r" id="s_l" style="left:218.80px;top:454.01px;font-size:8.58px;line-height:8.58px;font-weight:400;color:#6f6c69;letter-spacing:0.000px;transform:scaleX(0.9420);transform-origin:0 0;">Scrap</div>
<div class="t r" id="s_v" style="left:219.50px;top:464.01px;font-size:11.77px;line-height:11.77px;font-weight:400;color:#33312e;letter-spacing:3.000px;">0</div>
<div class="t" id="sr" style="left:414.60px;top:460.00px;font-size:9.74px;line-height:9.74px;font-weight:700;color:#67645f;letter-spacing:0.000px;transform:scaleX(0.8816);transform-origin:0 0;">Scrap Reason</div>
<div class="t" id="s_b" style="left:666.80px;top:459.00px;font-size:10.90px;line-height:10.90px;font-weight:700;color:#a4a19e;letter-spacing:0.000px;transform:scaleX(0.7877);transform-origin:0 0;">Scrap</div>
<div class="t" id="ps" style="left:207.25px;top:518.00px;font-size:14.17px;line-height:14.17px;font-weight:700;color:#161513;letter-spacing:-0.472px;">Production summary</div>
<div class="t r" id="cmp_l" style="left:208.25px;top:558.00px;font-size:8.28px;line-height:8.28px;font-weight:400;color:#6f6c69;letter-spacing:0.002px;">Completed</div>
<div class="t r" id="cmp_v" style="left:208.25px;top:568.01px;font-size:10.90px;line-height:10.90px;font-weight:400;color:#33312e;letter-spacing:4.000px;">0</div>
<div class="t r" id="rej_l" style="left:397.20px;top:558.00px;font-size:8.28px;line-height:8.28px;font-weight:400;color:#6f6c69;letter-spacing:0.058px;">Rejected</div>
<div class="t r" id="rej_v" style="left:397.20px;top:568.01px;font-size:10.90px;line-height:10.90px;font-weight:400;color:#33312e;letter-spacing:3.600px;">0</div>
<div class="t r" id="scr_l" style="left:588.00px;top:558.00px;font-size:8.28px;line-height:8.28px;font-weight:400;color:#6f6c69;letter-spacing:-0.031px;">Scrapped</div>
<div class="t r" id="scr_v" style="left:588.00px;top:568.01px;font-size:10.90px;line-height:10.90px;font-weight:400;color:#33312e;letter-spacing:2.400px;">0</div>
<div class="t r" id="ex_l" style="left:208.25px;top:592.00px;font-size:8.07px;line-height:8.07px;font-weight:400;color:#6f6c69;letter-spacing:0.149px;">Execution Started</div>
<div class="t r" id="ex_v" style="left:208.25px;top:602.01px;font-size:10.90px;line-height:10.90px;font-weight:400;color:#33312e;letter-spacing:0.584px;">8/1/25 7:37 AM</div>
<div class="t" id="acc0" style="left:859.70px;top:187.00px;font-size:11.19px;line-height:11.19px;font-weight:700;color:#161513;letter-spacing:-0.301px;">Reported exceptions</div>
<div class="t" id="acc1" style="left:859.70px;top:220.01px;font-size:10.90px;line-height:10.90px;font-weight:700;color:#161513;letter-spacing:-0.000px;">Details</div>
<div class="t r" id="dl0" style="left:831.70px;top:250.01px;font-size:8.14px;line-height:8.14px;font-weight:400;color:#7c7975;letter-spacing:0.333px;">Item</div>
<div class="t r" id="dv0" style="left:831.70px;top:260.01px;font-size:11.19px;line-height:11.19px;font-weight:400;color:#33312e;letter-spacing:0.144px;">5080528B</div>
<div class="t r" id="dl1" style="left:831.70px;top:284.01px;font-size:8.14px;line-height:8.14px;font-weight:400;color:#7c7975;letter-spacing:0.053px;">Item Description</div>
<div class="t r" id="dv1" style="left:831.70px;top:294.01px;font-size:11.19px;line-height:11.19px;font-weight:400;color:#33312e;letter-spacing:-0.184px;">Bulk Supremo Fitness Drink</div>
<div class="t r" id="dl2" style="left:831.70px;top:318.01px;font-size:8.14px;line-height:8.14px;font-weight:400;color:#7c7975;letter-spacing:-0.047px;">Ready Quantity</div>
<div class="t r" id="dv2" style="left:831.70px;top:328.01px;font-size:11.19px;line-height:11.19px;font-weight:400;color:#33312e;letter-spacing:-0.140px;">1000 Gallon</div>
<div class="t r" id="dl3" style="left:831.70px;top:352.01px;font-size:8.14px;line-height:8.14px;font-weight:400;color:#7c7975;letter-spacing:0.197px;">Batch Quantity</div>
<div class="t r" id="dv3" style="left:831.70px;top:362.01px;font-size:11.19px;line-height:11.19px;font-weight:400;color:#33312e;letter-spacing:-0.140px;">1000 Gallon</div>
<div class="t r" id="dl4" style="left:831.70px;top:386.01px;font-size:8.14px;line-height:8.14px;font-weight:400;color:#7c7975;letter-spacing:0.280px;">Output</div>
<div class="t r" id="dv4" style="left:831.70px;top:396.01px;font-size:11.19px;line-height:11.19px;font-weight:400;color:#33312e;letter-spacing:0.031px;">5082098W</div>
<div class="t r" id="dl5" style="left:831.70px;top:420.01px;font-size:8.14px;line-height:8.14px;font-weight:400;color:#7c7975;letter-spacing:0.044px;">Operation Yield</div>
<div class="t r" id="dv5" style="left:832.70px;top:430.01px;font-size:11.19px;line-height:11.19px;font-weight:400;color:#33312e;letter-spacing:0.000px;transform:scaleX(0.7564);transform-origin:0 0;">1</div>
<div class="t" id="acc2" style="left:859.70px;top:466.01px;font-size:11.63px;line-height:11.63px;font-weight:700;color:#161513;letter-spacing:-0.324px;">Additional information</div>
<div class="t" id="acc3" style="left:860.70px;top:499.01px;font-size:11.63px;line-height:11.63px;font-weight:700;color:#161513;letter-spacing:0.000px;transform:scaleX(0.9282);transform-origin:0 0;">Operation equipment</div>
<div class="t" id="acc4" style="left:860.70px;top:532.01px;font-size:11.63px;line-height:11.63px;font-weight:700;color:#161513;letter-spacing:0.000px;transform:scaleX(0.9354);transform-origin:0 0;">Workstation equipment</div>
<div class="t" id="acc5" style="left:860.70px;top:566.01px;font-size:11.63px;line-height:11.63px;font-weight:700;color:#161513;letter-spacing:0.000px;transform:scaleX(0.9214);transform-origin:0 0;">Attachments</div>
<div class="t" id="acc6" style="left:860.70px;top:599.01px;font-size:11.63px;line-height:11.63px;font-weight:700;color:#161513;letter-spacing:0.000px;transform:scaleX(0.9249);transform-origin:0 0;">Workstation attachments</div>
<div class="t" id="acc7" style="left:860.70px;top:632.01px;font-size:11.63px;line-height:11.63px;font-weight:700;color:#161513;letter-spacing:0.000px;transform:scaleX(0.9074);transform-origin:0 0;">Operators</div>
</body></html>
